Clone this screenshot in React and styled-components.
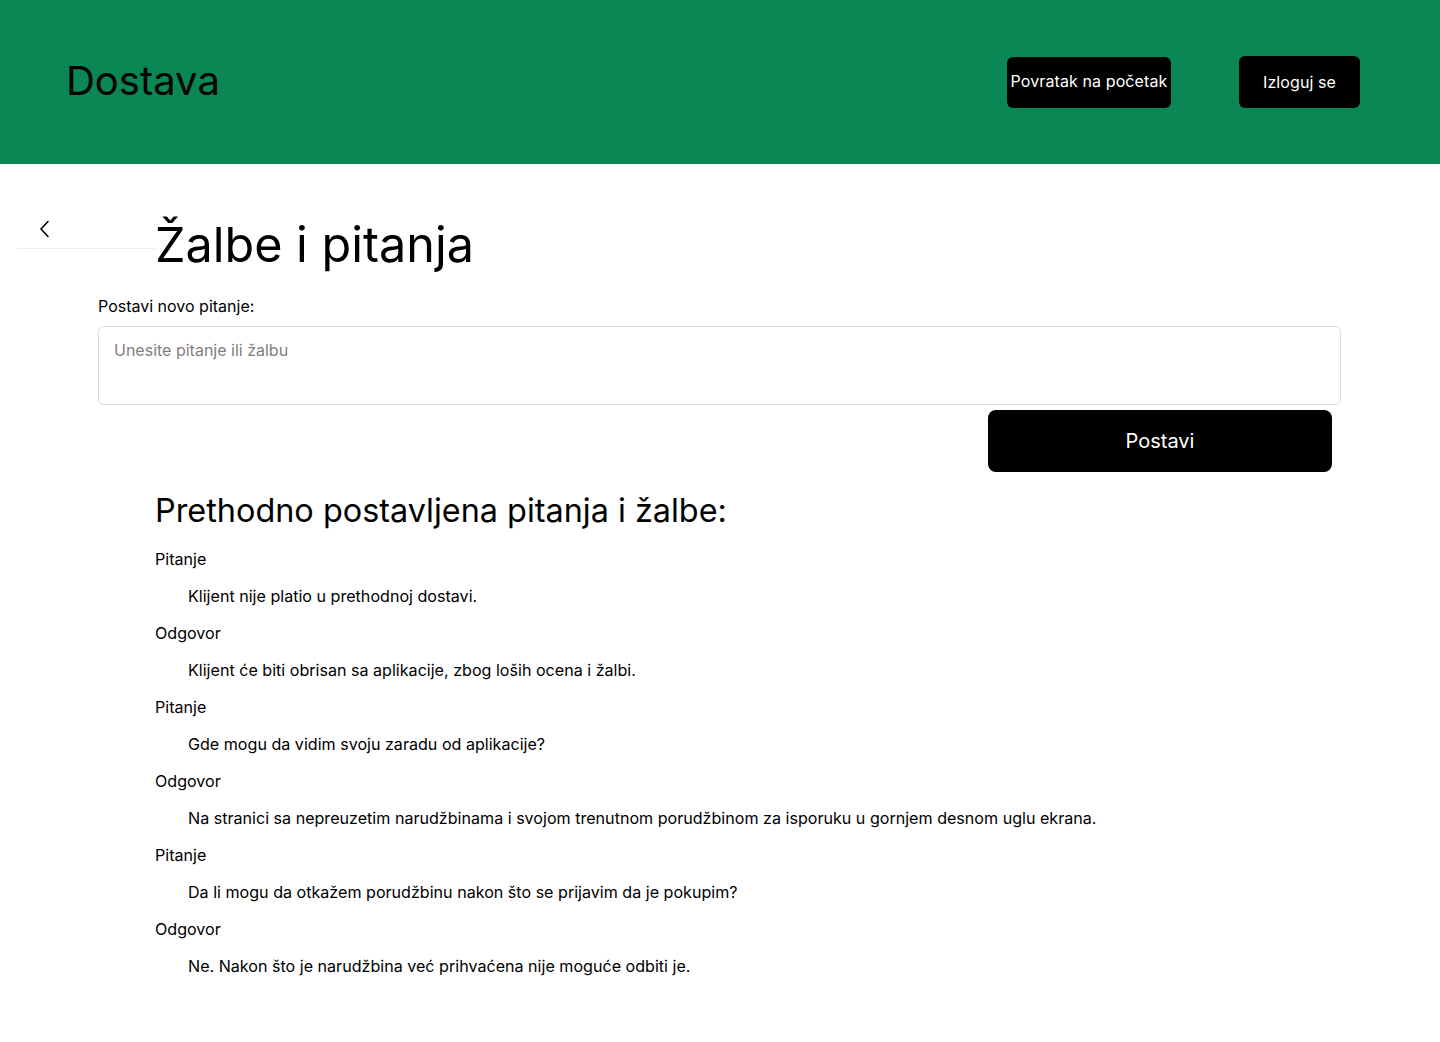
import React from 'react';
import styled, { createGlobalStyle } from 'styled-components';

const GlobalStyle = createGlobalStyle`
  body {
    margin: 0;
    font-family: Inter, "Noto Sans", sans-serif;
    background: #ffffff;
    color: #000;
  }
  * { box-sizing: border-box; }
`;

const Header = styled.header`
  height: 164px;
  background-color: #0a8754;
  display: flex;
  align-items: center;
  padding: 0 80px 0 66px;
`;

const Logo = styled.h1`
  margin: 0 auto 4px 0;
  font-size: 40px;
  font-weight: 400;
  color: #000;
`;

const NavButtons = styled.div`
  display: flex;
  align-items: center;
  gap: 68px;
`;

const NavButton = styled.button`
  background: #000;
  color: #fff;
  border: none;
  border-radius: 6px;
  font-family: inherit;
  font-size: 16px;
  letter-spacing: 0.1px;
  width: ${p => p.$w}px;
  height: ${p => p.$tall ? '52px' : '51px'};
  padding: ${p => p.$tall ? '0' : '0 0 3px'};
  margin-top: ${p => p.$tall ? '0' : '1px'};
  cursor: pointer;
`;

const TitleRow = styled.div`
  display: flex;
  align-items: flex-start;
  padding: 46px 0 0 17px;
`;

const BackCell = styled.div`
  width: 138px;
  height: 39px;
  border-bottom: 1px solid #ececec;
  display: flex;
  align-items: center;
  padding-left: 22px;
`;

const Title = styled.h2`
  margin: 6px 0 0 0;
  font-size: 48.5px;
  font-weight: 400;
  line-height: 58px;
`;

const Main = styled.main`
  padding: 0 99px 40px 98px;
`;

const Label = styled.label`
  display: block;
  font-size: 16px;
  line-height: 19px;
  margin: 23px 0 10px;
`;

const TextArea = styled.textarea`
  display: block;
  width: 100%;
  height: 79px;
  border: 1px solid #dcdcdc;
  border-radius: 6px;
  padding: 13px 15px;
  font-family: inherit;
  font-size: 16px;
  resize: none;
  outline: none;
  &::placeholder { color: #808080; }
`;

const ButtonRow = styled.div`
  display: flex;
  justify-content: flex-end;
  padding: 5px 9px 0 0;
`;

const SubmitButton = styled.button`
  width: 344px;
  height: 62px;
  background: #000;
  color: #fff;
  border: none;
  border-radius: 8px;
  font-family: inherit;
  font-size: 20px;
  cursor: pointer;
`;

const History = styled.section`
  padding-left: 57px;
`;

const HistoryTitle = styled.h3`
  margin: 19px 0 20px;
  font-size: 32.4px;
  font-weight: 400;
  line-height: 39px;
`;

const List = styled.div`
  display: flex;
  flex-direction: column;
  gap: 18px;
`;

const Entry = styled.div`
  font-size: 16.1px;
  line-height: 19px;
  padding-left: ${p => p.$indent ? '33px' : '0'};
`;

const items = [
  ['Pitanje', 'Klijent nije platio u prethodnoj dostavi.'],
  ['Odgovor', 'Klijent će biti obrisan sa aplikacije, zbog loših ocena i žalbi.'],
  ['Pitanje', 'Gde mogu da vidim svoju zaradu od aplikacije?'],
  ['Odgovor', 'Na stranici sa nepreuzetim narudžbinama i svojom trenutnom porudžbinom za isporuku u gornjem desnom uglu ekrana.'],
  ['Pitanje', 'Da li mogu da otkažem porudžbinu nakon što se prijavim da je pokupim?'],
  ['Odgovor', 'Ne. Nakon što je narudžbina već prihvaćena nije moguće odbiti je.'],
];

function ChevronLeft() {
  return (
    <svg width="12" height="18" viewBox="0 0 12 18" fill="none">
      <path d="M9 1.5L2 9l7 7.5" stroke="#000" strokeWidth="1.6" strokeLinecap="round" strokeLinejoin="round" />
    </svg>
  );
}

export default function App() {
  return (
    <>
      <GlobalStyle />
      <Header>
        <Logo>Dostava</Logo>
        <NavButtons>
          <NavButton $w={164}>Povratak na početak</NavButton>
          <NavButton $w={121} $tall>Izloguj se</NavButton>
        </NavButtons>
      </Header>
      <TitleRow>
        <BackCell><ChevronLeft /></BackCell>
        <Title>Žalbe i pitanja</Title>
      </TitleRow>
      <Main>
        <Label htmlFor="pitanje">Postavi novo pitanje:</Label>
        <TextArea id="pitanje" placeholder="Unesite pitanje ili žalbu" />
        <ButtonRow>
          <SubmitButton>Postavi</SubmitButton>
        </ButtonRow>
        <History>
          <HistoryTitle>Prethodno postavljena pitanja i žalbe:</HistoryTitle>
          <List>
            {items.map(([label, text], i) => (
              <React.Fragment key={i}>
                <Entry>{label}</Entry>
                <Entry $indent>{text}</Entry>
              </React.Fragment>
            ))}
          </List>
        </History>
      </Main>
    </>
  );
}
